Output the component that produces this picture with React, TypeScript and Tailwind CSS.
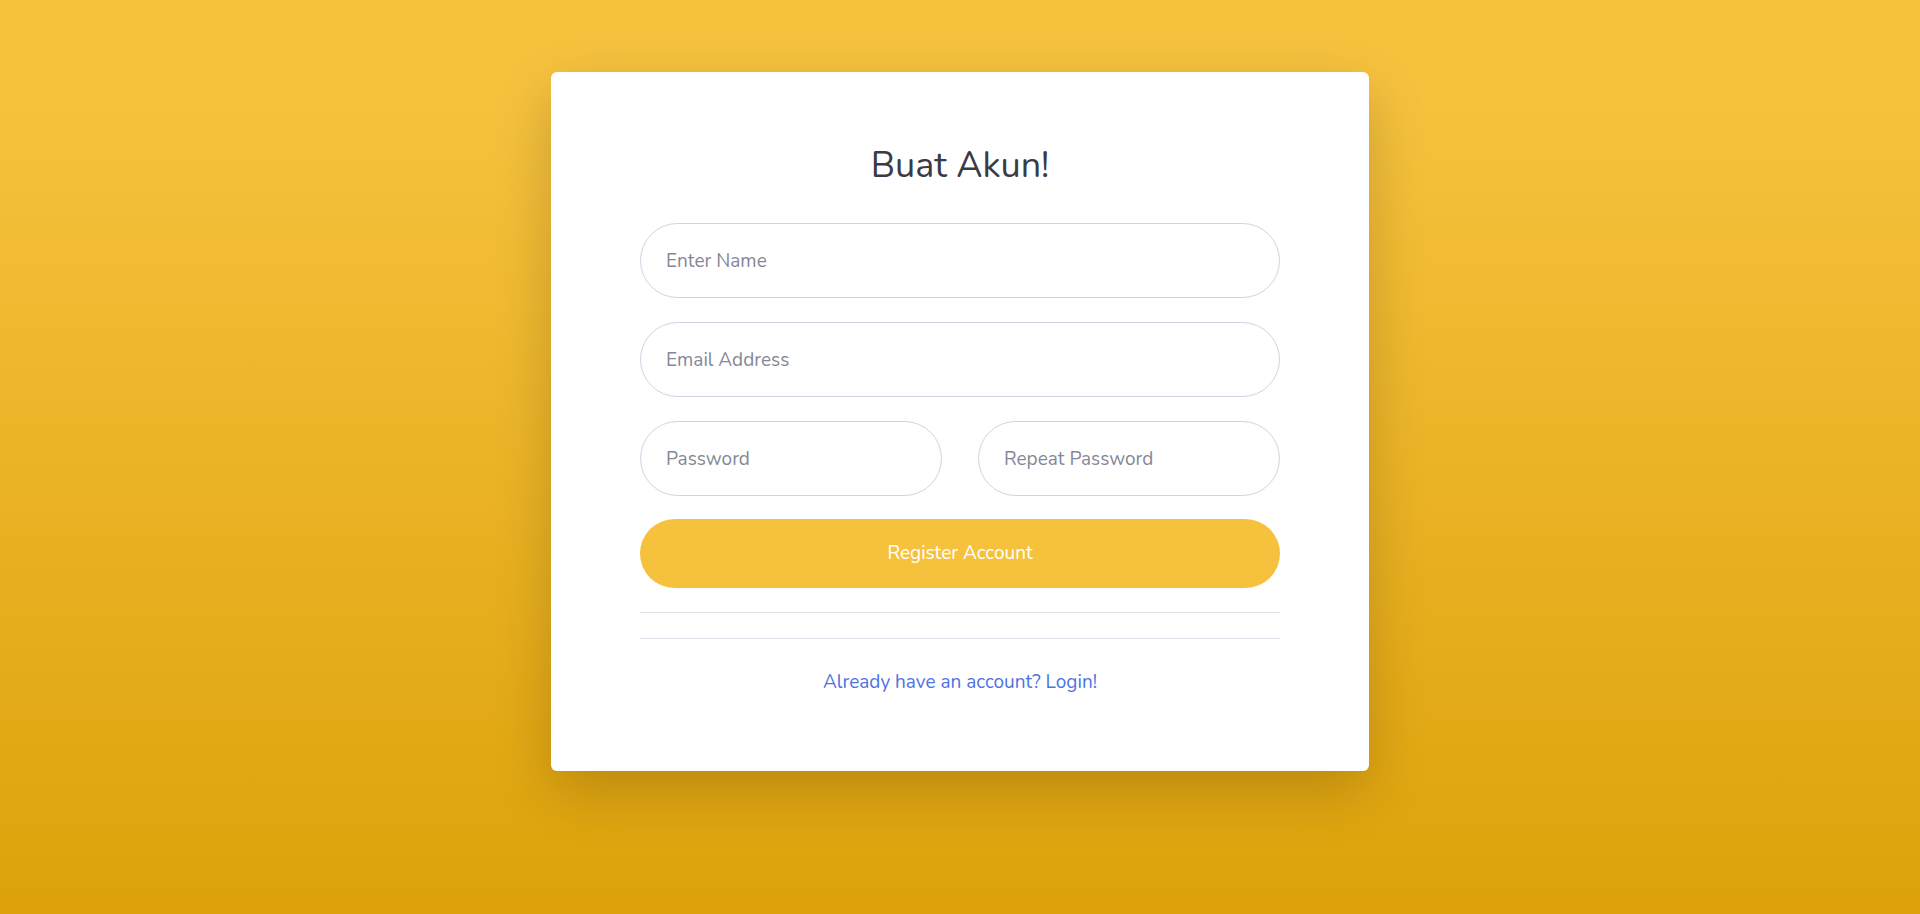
import React from 'react';

const inputClass =
  'w-full h-[75px] rounded-full border border-[#d1d3e2] bg-white pl-[25px] pr-5 text-[19px] text-[#6e707e] placeholder:text-[#858796] outline-none';

const App: React.FC = () => {
  return (
    <div
      className="min-h-screen w-full bg-[linear-gradient(180deg,#f6c23e_10%,#dda20a_100%)] pt-[72px]"
      style={{ fontFamily: 'Nunito, Lato, "Open Sans", sans-serif' }}
    >
      <div className="mx-auto w-[818px] rounded-[6px] bg-white px-[89px] pt-[72px] pb-[75px] shadow-[0_20px_58px_rgba(0,0,0,0.18)]">
        <h1 className="mb-[35px] text-center text-[36px] leading-[44px] font-normal text-[#3a3b45]">
          Buat Akun!
        </h1>
        <form className="flex flex-col" onSubmit={(e) => e.preventDefault()}>
          <input className={inputClass} type="text" placeholder="Enter Name" />
          <input className={`${inputClass} mt-[24px]`} type="email" placeholder="Email Address" />
          <div className="mt-[24px] grid grid-cols-2 gap-[36px]">
            <input className={inputClass} type="password" placeholder="Password" />
            <input className={inputClass} type="password" placeholder="Repeat Password" />
          </div>
          <button
            type="submit"
            className="mt-[23px] h-[69px] w-full rounded-full bg-[#f6c23e] text-[19px] text-white"
          >
            Register Account
          </button>
          <hr className="mt-[24px] border-t border-[#dfe1ea]" />
          <hr className="mt-[25px] border-t border-[#dfe1ea]" />
        </form>
        <div className="mt-[30px] text-center">
          <a href="#" className="text-[19px] leading-[27px] text-[#4e73df]">
            Already have an account? Login!
          </a>
        </div>
      </div>
    </div>
  );
};

export default App;
